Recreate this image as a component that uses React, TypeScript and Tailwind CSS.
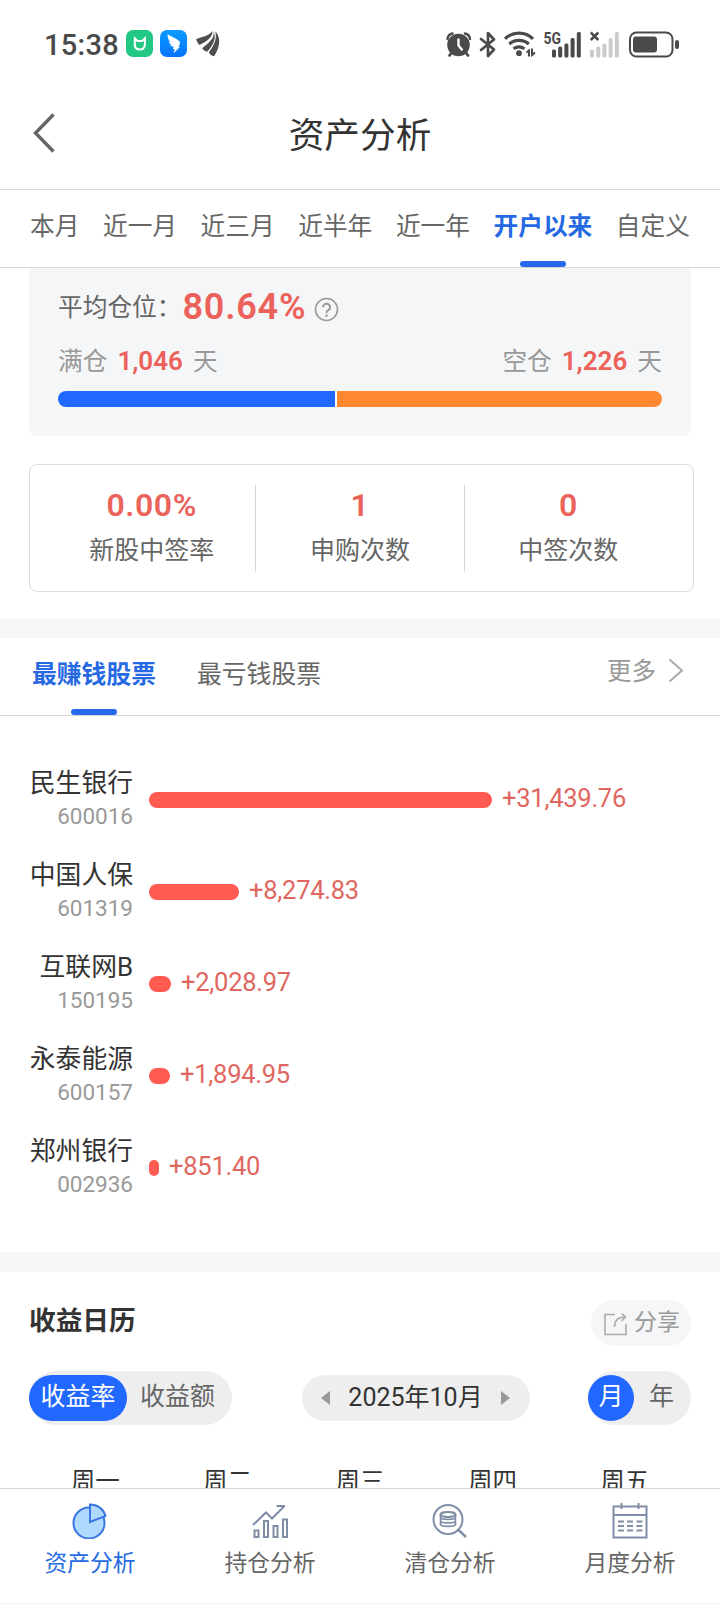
import { useState } from 'react';
import type { ReactNode } from 'react';
import clsx from 'clsx';

interface Stock {
  name: string;
  code: string;
  profit: number;
}

const RANGES = ['本月', '近一月', '近三月', '近半年', '近一年', '开户以来', '自定义'];

const SUBSCRIPTION = [
  { value: '0.00%', label: '新股中签率' },
  { value: '1', label: '申购次数' },
  { value: '0', label: '中签次数' },
];

const STOCKS: Stock[] = [
  { name: '民生银行', code: '600016', profit: 31439.76 },
  { name: '中国人保', code: '601319', profit: 8274.83 },
  { name: '互联网B', code: '150195', profit: 2028.97 },
  { name: '永泰能源', code: '600157', profit: 1894.95 },
  { name: '郑州银行', code: '002936', profit: 851.4 },
];

const WEEKDAYS = ['周一', '周二', '周三', '周四', '周五'];

const MAX_BAR = 343;
const MIN_BAR = 10;

const formatProfit = (n: number) =>
  '+' + n.toLocaleString('en-US', { minimumFractionDigits: 2, maximumFractionDigits: 2 });

export default function App() {
  const [range, setRange] = useState('开户以来');

  return (
    <div className="flex h-[1604px] w-[720px] flex-col overflow-hidden bg-white font-[Roboto,'Noto_Sans_CJK_SC',sans-serif] text-[#333]">
      <StatusBar />
      <Header />
      <nav className="flex h-[79px] shrink-0 justify-between border-y border-[#d8d8d8] px-[30px]">
        {RANGES.map(r => (
          <button
            key={r}
            onClick={() => setRange(r)}
            className={clsx(
              'relative flex h-full justify-center pt-[19px] text-[24.7px] leading-[36px]',
              r === range ? 'font-bold text-[#2669e3]' : 'text-[#666]'
            )}
          >
            {r}
            {r === range && <Indicator />}
          </button>
        ))}
      </nav>
      <main className="flex min-h-0 flex-1 flex-col overflow-hidden">
        <PositionCard />
        <SubscriptionCard />
        <div className="h-[19px] shrink-0 bg-[#f5f6f8]" />
        <TopStocks />
        <div className="h-[20px] shrink-0 bg-[#f5f6f8]" />
        <ProfitCalendar />
      </main>
      <BottomNav />
    </div>
  );
}

function Indicator() {
  return <span className="absolute bottom-0 left-1/2 h-[6px] w-[46px] -translate-x-1/2 rounded-[3px] bg-[#2669eb]" />;
}

function StatusBar() {
  return (
    <div className="flex h-[87px] shrink-0 items-center justify-between pr-[41px] pl-[44px]">
      <div className="flex items-center">
        <span className="w-[82px] pt-[2px] text-[29px] leading-[30px] font-medium tracking-[0.3px] text-[#4a4a4a]">15:38</span>
        <svg className="mr-[7px]" width="27" height="27" viewBox="0 0 27 27">
          <rect width="27" height="27" rx="7" fill="#20c883" />
          <path d="M8.8 15.6V8.4l2.7 2.6h4.6l2.8-2.6v6.2a5 5 0 0 1-1.9 4" fill="none" stroke="#fff" strokeWidth="2" />
          <path d="M8.6 14.6c.2 3 2.2 5 5.4 5 1.5 0 2.7-.5 3.6-1.3" fill="none" stroke="#fff" strokeWidth="2" />
        </svg>
        <svg className="mr-[9px]" width="27" height="27" viewBox="0 0 27 27">
          <defs>
            <linearGradient id="wing" x1="0" y1="0" x2="0" y2="1">
              <stop offset="0" stopColor="#0a9cff" />
              <stop offset="1" stopColor="#0874fb" />
            </linearGradient>
          </defs>
          <rect width="27" height="27" rx="7" fill="url(#wing)" />
          <path d="M7.6 4c3 2.4 8 3.9 11.2 6.8 1.9 1.7 1.5 3-.4 6h1.8l-6.7 6.5 1.3-4.3h-2l1-2.3c-1.9 0-3.2-.8-3.9-2l2.3.2c-1.9-.8-3.3-2-3.8-3.4l2.8.9C8.9 10.6 7.3 8.3 7.6 4z" fill="#fff" />
        </svg>
        <svg width="25" height="27" viewBox="0 0 25 27" fill="#4f4f4f">
          <path d="M.3 9C6 6.5 12.5 6.5 16.3 1c.8 5.500-5 10.500-12.800 14C1.800 13.500.6 11.300.3 9z" />
          <path d="M17.500 1.200c1.300 6.300-3 10.300-11.300 17 1.200 2 2.800 3 4.900 3.500C16.800 15.500 21 8.500 17.500 1.200z" />
          <path d="M19.200 1.300c2.300 8.200-1.800 14.700-6.400 21.200 1.300 2.100 2.900 3.300 5.300 3.800 5.800-8.800 7.400-18.300 1.100-25z" />
        </svg>
      </div>
      <div className="flex items-center pt-px">
        <svg className="mr-[8px]" width="25" height="27" viewBox="0 0 25 27">
          <circle cx="12.5" cy="14" r="11.3" fill="#4a4a4a" />
          <path d="M1.5 8Q2 3.5 6.5 2.5M24 8Q23.5 3.5 19 2.5" fill="none" stroke="#4a4a4a" strokeWidth="2.4" strokeLinecap="round" />
          <path d="M5 22.5l-1.5 2M20.5 22.5l1.5 2" stroke="#4a4a4a" strokeWidth="2.8" strokeLinecap="round" />
          <path d="M12.5 8.5v6l3.3 4" fill="none" stroke="#fff" strokeWidth="2.4" strokeLinecap="round" />
        </svg>
        <svg className="mr-[8px]" width="17" height="27" viewBox="0 0 17 27" fill="none" stroke="#4a4a4a" strokeWidth="2.7" strokeLinejoin="round" strokeLinecap="round">
          <path d="M2 8l13 10.500-6 6.500V2l6 6.500L2 19" />
        </svg>
        <svg className="mr-[7px]" width="32" height="27" viewBox="0 0 32 27" fill="none" stroke="#4a4a4a" strokeWidth="3.2">
          <path d="M1 7.800a20 20 0 0 1 28 0" />
          <path d="M5.200 13a15 15 0 0 1 19.600 0" />
          <path d="M9.500 17.800a9.500 9.500 0 0 1 11 0" />
          <circle cx="15" cy="22.2" r="2.9" fill="#4a4a4a" stroke="none" />
          <path d="M22.500 21.500l2.500-2v6M28 17.500v6.500l3-2.500" strokeWidth="2" />
        </svg>
        <svg className="mr-[9px]" width="38" height="27" viewBox="-1 0 38 27" fill="#4a4a4a">
          <text x="-.5" y="12.5" fontSize="16" fontWeight="700" textLength="17.5" lengthAdjust="spacingAndGlyphs">5G</text>
          <SignalBars x={8} />
        </svg>
        <svg className="mr-[10px]" width="29" height="27" viewBox="0 0 29 27" fill="#cbcbcb">
          <path d="M.8 1.5l7.500 7.500M8.300 1.500L.8 9" stroke="#4a4a4a" strokeWidth="2.5" />
          <SignalBars x={0} />
        </svg>
        <svg width="50" height="27" viewBox="0 0 50 27">
          <rect x="1" y="1.5" width="42.5" height="24" rx="6.5" fill="none" stroke="#4a4a4a" strokeWidth="2" />
          <rect x="4" y="5.5" width="24" height="16" rx="3" fill="#4a4a4a" />
          <rect x="46" y="9" width="4" height="9" rx="2" fill="#4a4a4a" />
        </svg>
      </div>
    </div>
  );
}

function SignalBars({ x }: { x: number }) {
  return (
    <g>
      {[8, 11, 14, 19.5, 25.5].map((h, i) => (
        <rect key={h} x={x + i * 6.2} y={26.5 - h} width="4" height={h} rx="1.5" />
      ))}
    </g>
  );
}

function Header() {
  return (
    <header className="relative flex h-[102px] shrink-0 items-center justify-center">
      <svg className="absolute top-[26px] left-[32px]" width="24" height="40" viewBox="0 0 24 40" fill="none" stroke="#666" strokeWidth="3.4">
        <path d="M21.500 1.500L3.500 20l18 18.500" />
      </svg>
      <h1 className="pb-[4px] text-[35.7px] leading-[50px]">资产分析</h1>
    </header>
  );
}

function PositionCard() {
  return (
    <section className="mx-[29px] h-[168px] shrink-0 rounded-b-lg bg-[#f5f6f8] px-[29px]">
      <div className="flex h-[76px] items-center text-[#666]">
        <span className="pt-[4px] text-[24.7px]">平均仓位：</span>
        <span className="ml-px pt-[2px] text-[36px] font-semibold tracking-[0.8px] text-[#ec625a]">80.64%</span>
        <svg className="mt-[6px] ml-[8px]" width="25" height="25" viewBox="0 0 25 25" fill="none" stroke="#999" strokeWidth="1.6">
          <circle cx="12.5" cy="12.5" r="11" />
          <path d="M9 10.200a3.500 3.500 0 1 1 5.300 3c-1.300.8-1.700 1.300-1.700 2.800" strokeWidth="2" />
          <path d="M12.500 17.500v2.200" strokeWidth="2.2" />
        </svg>
      </div>
      <div className="flex h-[34px] items-center justify-between pt-px">
        <DayCount label="满仓" days="1,046" />
        <DayCount label="空仓" days="1,226" />
      </div>
      <div className="mt-[13px] flex h-[16px] gap-[2px] overflow-hidden rounded-full bg-white">
        <div className="w-[277px] bg-[#2068ff]" />
        <div className="flex-1 bg-[#ff8831]" />
      </div>
    </section>
  );
}

function DayCount({ label, days }: { label: string; days: string }) {
  return (
    <div className="flex items-center text-[24.7px] text-[#999]">
      {label}
      <span className="mx-[10px] text-[26px] font-semibold text-[#ec625a]">{days}</span>
      天
    </div>
  );
}

function SubscriptionCard() {
  return (
    <section className="mt-[28px] mr-[26px] mb-[27px] ml-[29px] flex h-[128px] shrink-0 items-center rounded-lg border border-[#dcdcdc] pr-[21px] pl-[18px]">
      {SUBSCRIPTION.map((item, i) => (
        <div
          key={item.label}
          className={clsx('flex h-[87px] flex-1 flex-col items-center', i < 2 && 'border-r border-[#d8d8d8]')}
        >
          <span className="text-[32px] leading-[40px] font-semibold tracking-[0.6px] text-[#ea645c]">{item.value}</span>
          <span className="mt-[4px] text-[25px] leading-[44px] text-[#666]">{item.label}</span>
        </div>
      ))}
    </section>
  );
}

function TopStocks() {
  return (
    <section className="flex h-[614px] shrink-0 flex-col">
      <div className="flex h-[78px] shrink-0 border-b border-[#d8d8d8] pl-[32px] text-[24.8px] leading-[36px]">
        <button className="relative flex pt-[19px] font-bold text-[#2669e3]">
          最赚钱股票
          <Indicator />
        </button>
        <button className="ml-[41px] flex pt-[19px] text-[#666]">最亏钱股票</button>
        <a className="mr-[36px] ml-auto flex items-start pt-[16px] text-[#999]">
          <span className="text-[24.5px]">更多</span>
          <svg className="mt-[4px] ml-[12px]" width="16" height="25" viewBox="0 0 16 25" fill="none" stroke="#aaa" strokeWidth="2">
            <path d="M1.500 1.500L14 12.500l-12.500 11" />
          </svg>
        </a>
      </div>
      <ul className="pt-[46px]">
        {STOCKS.map(s => (
          <StockRow key={s.code} stock={s} />
        ))}
      </ul>
    </section>
  );
}

function StockRow({ stock }: { stock: Stock }) {
  const width = Math.max(MIN_BAR, Math.round((stock.profit / STOCKS[0].profit) * MAX_BAR));

  return (
    <li className="flex h-[92px]">
      <div className="w-[133px] pt-[2px] text-right">
        <p className="text-[25.8px] leading-[38px]">{stock.name}</p>
        <p className="text-[22.5px] leading-[28px] text-[#999]">{stock.code}</p>
      </div>
      <div className="ml-[16px] flex h-[76px] items-center">
        <span className="h-[16px] rounded-full bg-[#ff5b53]" style={{ width }} />
        <span className="ml-[10px] pb-[4px] text-[25.5px] leading-[36px] tracking-[-0.25px] text-[#df675f]">{formatProfit(stock.profit)}</span>
      </div>
    </li>
  );
}

function ProfitCalendar() {
  const [mode, setMode] = useState<'rate' | 'amount'>('rate');
  const [period, setPeriod] = useState<'month' | 'year'>('month');

  return (
    <section className="flex shrink-0 flex-col px-[29px] pt-[28px]">
      <div className="flex h-[46px] items-center justify-between">
        <h2 className="pb-[5px] text-[26.7px] leading-[38px] font-bold">收益日历</h2>
        <button className="flex h-[46px] w-[100px] items-center rounded-full bg-[#f5f6f8] pl-[13px] text-[23px] text-[#999]">
          <svg className="mt-[2px] mr-[7px]" width="23" height="24" viewBox="0 0 23 24" fill="none" stroke="#aaa" strokeWidth="1.6">
            <path d="M11 2.500H1v20h21V12" />
            <path d="M10.500 15c0-6 3.500-10 11-10M17.500 1.500L21.500 5l-4 4" />
          </svg>
          分享
        </button>
      </div>
      <div className="mt-[25px] flex h-[54px] items-center text-[25px]">
        <div className="flex h-full w-[203px] items-center rounded-full bg-[#eee]">
          <Segment active={mode === 'rate'} width="w-[98px]" onClick={() => setMode('rate')}>收益率</Segment>
          <Segment active={mode === 'amount'} width="w-[101px]" onClick={() => setMode('amount')}>收益额</Segment>
        </div>
        <div className="ml-[70px] flex h-[46px] w-[228px] items-center justify-between rounded-full bg-[#eee] pr-[20px] pl-[19px]">
          <svg width="9" height="14" viewBox="0 0 9 14" fill="#999"><path d="M9 0v14L0 7z" /></svg>
          <span className="leading-[36px]">2025年10月</span>
          <svg width="9" height="14" viewBox="0 0 9 14" fill="#999"><path d="M0 0v14l9-7z" /></svg>
        </div>
        <div className="ml-auto flex h-full w-[103px] items-center rounded-full bg-[#eee]">
          <Segment active={period === 'month'} width="w-[46px]" onClick={() => setPeriod('month')}>月</Segment>
          <Segment active={period === 'year'} width="w-[55px]" onClick={() => setPeriod('year')}>年</Segment>
        </div>
      </div>
      <div className="mt-[39px] grid grid-cols-5 text-center text-[24.5px] leading-[36px]">
        {WEEKDAYS.map(d => (
          <span key={d}>{d}</span>
        ))}
      </div>
    </section>
  );
}

function Segment({ active, width, onClick, children }: { active: boolean; width: string; onClick: () => void; children: ReactNode }) {
  return (
    <button
      onClick={onClick}
      className={clsx('h-[46px] rounded-full pb-[3px] leading-[43px]', width, active ? 'bg-[#2068ff] text-white' : 'text-[#666]')}
    >
      {children}
    </button>
  );
}

function BottomNav() {
  return (
    <footer className="grid h-[116px] shrink-0 grid-cols-4 border-y border-t-[#d8d8d8] border-b-[#f2f4f6] bg-white text-[#666]">
      <NavItem label="资产分析" active>
        <circle cx="17" cy="20" r="15.5" fill="#b0d9ff" stroke="#3a78e0" />
        <path d="M18 1.500v17.500l15.500-6C31.500 6 25.500 1.500 18 1.500z" fill="#b0d9ff" stroke="#3a78e0" />
      </NavItem>
      <NavItem label="持仓分析">
        <path d="M1 22L14 9.500l6 6L32.500 3M24.500 3H33" />
        <path d="M2.500 27.500h4v6.500h-4zM12 18h4v16h-4zM21.500 23h4v11h-4zM31 16.500h4V34h-4z" />
      </NavItem>
      <NavItem label="清仓分析">
        <circle cx="16" cy="16.5" r="14.5" />
        <path d="M26 26.500l8 7.500" strokeWidth="2.4" />
        <ellipse cx="16" cy="11.5" rx="7.5" ry="2.4" />
        <path d="M8.500 11.500v2.500c0 3.200 15 3.200 15 0v-2.500M8.500 15.500v2c0 3.200 15 3.200 15 0v-2M8.500 19v2c0 3.200 15 3.200 15 0v-2" strokeWidth="1.8" />
      </NavItem>
      <NavItem label="月度分析">
        <path d="M1.500 3.500h33v31h-33zM1.500 12h33M9.500 0v6M26.500 0v6" />
        <path d="M6 18.500h6M15 18.500h6M24.500 18.500h6M6 23h6M15 23h6M24.500 23h6M6 27.500h6M15 27.500h6M24.500 27.500h6" />
      </NavItem>
    </footer>
  );
}

function NavItem({ label, active, children }: { label: string; active?: boolean; children: ReactNode }) {
  return (
    <button className="flex flex-col items-center pt-[14px]">
      <svg width="36" height="36" viewBox="0 0 36 36" fill="none" stroke="#7f8da6" strokeWidth="2">
        {children}
      </svg>
      <span className={clsx('mt-[8px] text-[22.8px] leading-[34px]', active && 'text-[#2669e3]')}>{label}</span>
    </button>
  );
}
